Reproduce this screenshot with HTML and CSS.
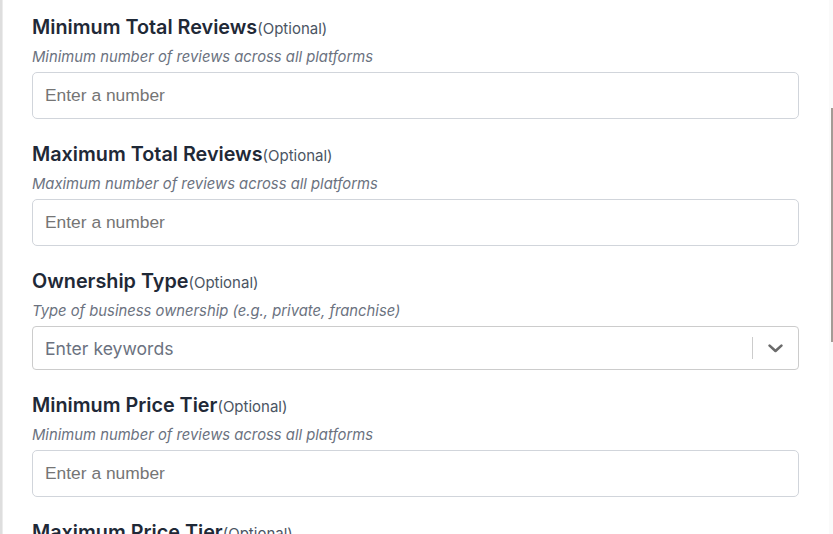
FILE: index.html
```html
<!DOCTYPE html>
<html lang="en">
    <head>
        <meta charset="UTF-8">
        <meta name="viewport" content="width=device-width, initial-scale=1.0">
        <title>Filters</title>
        <link rel="stylesheet" href="styles.css">
    </head>
    <body>
        <div class="backdrop-edge"></div>
        <div class="panel">
            <div class="field">
                <label class="field-label" for="min-reviews">Minimum Total Reviews<span class="optional">(Optional)</span></label>
                <div class="field-hint">Minimum number of reviews across all platforms</div>
                <input class="text-input" id="min-reviews" type="text" inputmode="numeric" placeholder="Enter a number">
            </div>
            <div class="field">
                <label class="field-label" for="max-reviews">Maximum Total Reviews<span class="optional">(Optional)</span></label>
                <div class="field-hint">Maximum number of reviews across all platforms</div>
                <input class="text-input" id="max-reviews" type="text" inputmode="numeric" placeholder="Enter a number">
            </div>
            <div class="field">
                <label class="field-label" for="ownership">Ownership Type<span class="optional">(Optional)</span></label>
                <div class="field-hint">Type of business ownership (e.g., private, franchise)</div>
                <div class="select">
                    <input class="select-input" id="ownership" type="text" placeholder="Enter keywords">
                    <span class="select-sep"></span>
                    <span class="select-arrow">
                        <svg width="15" height="9" viewBox="0 0 15 9">
                            <path d="M1.6 1.6 L7.5 7 L13.4 1.6" fill="none" stroke="#6b6b6b" stroke-width="2.6" stroke-linecap="round" stroke-linejoin="round"/>
                        </svg>
                    </span>
                </div>
            </div>
            <div class="field">
                <label class="field-label" for="min-price">Minimum Price Tier<span class="optional">(Optional)</span></label>
                <div class="field-hint">Minimum number of reviews across all platforms</div>
                <input class="text-input" id="min-price" type="text" inputmode="numeric" placeholder="Enter a number">
            </div>
            <div class="field">
                <label class="field-label" for="max-price">Maximum Price Tier<span class="optional">(Optional)</span></label>
            </div>
        </div>
        <div class="scroll-gutter">
            <div class="scroll-thumb"></div>
        </div>
    </body>
</html>
```

FILE: styles.css
```css
html, body {
    height: 100%;
}
body {
    margin: 0;
    display: flex;
    overflow: hidden;
    background: #fafafa;
    font-family: Inter, "Noto Sans", sans-serif;
    color: #1f2937;
}
.backdrop-edge {
    width: 3px;
    flex-shrink: 0;
    background: #dedede;
    border-right: 1px solid #ececec;
    box-sizing: border-box;
}
.panel {
    flex: 1;
    background: #fff;
    padding: 15px 30px 0 29px;
    overflow: hidden;
}
.field {
    margin-bottom: 23px;
}
.field-label {
    display: block;
    height: 24px;
    font-size: 19.8px;
    line-height: 24px;
    font-weight: 600;
    color: #1f2937;
    margin-bottom: 8px;
}
.optional {
    font-size: 15px;
    line-height: 16px;
    font-weight: 400;
    color: #4b5563;
}
.field-hint {
    height: 20px;
    font-size: 14.8px;
    line-height: 20px;
    font-style: italic;
    color: #6b7280;
    margin-bottom: 5px;
}
.text-input {
    display: block;
    width: 100%;
    height: 47px;
    box-sizing: border-box;
    border: 1px solid #d1d5db;
    border-radius: 5px;
    padding: 0 12px;
    font-family: "Liberation Sans", Arial, sans-serif;
    font-size: 17.4px;
    color: #111827;
    outline: none;
}
.text-input::placeholder {
    color: #757575;
}
.select {
    display: flex;
    align-items: center;
    height: 44px;
    box-sizing: border-box;
    border: 1px solid #cccccc;
    border-radius: 4px;
    background: #fff;
}
.select-input {
    flex: 1;
    border: none;
    outline: none;
    padding: 0 12px;
    height: 100%;
    background: transparent;
    font-family: Inter, "Noto Sans", sans-serif;
    font-size: 17.6px;
    color: #111827;
}
.select-input::placeholder {
    color: #6b7280;
}
.select-sep {
    width: 1px;
    height: 22px;
    background: #cccccc;
}
.select-arrow {
    display: flex;
    align-items: center;
    padding: 0 15px;
}
.scroll-gutter {
    width: 4px;
    flex-shrink: 0;
    display: flex;
    justify-content: flex-end;
}
.scroll-thumb {
    width: 2px;
    height: 234px;
    margin-top: 108px;
    background: #a39b95;
}
```
